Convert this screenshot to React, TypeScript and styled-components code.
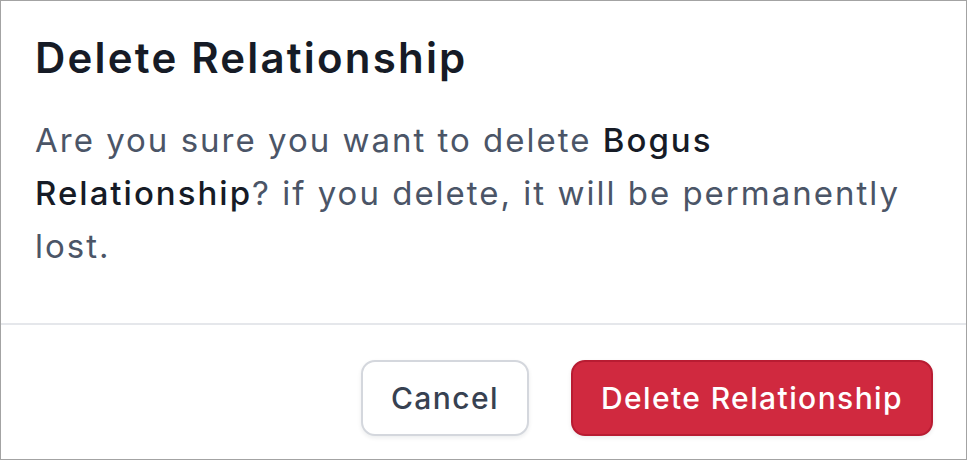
import React from "react";
import styled, { createGlobalStyle } from "styled-components";

const GlobalStyle = createGlobalStyle`
  html, body {
    margin: 0;
    padding: 0;
    background: #ffffff;
  }
  body {
    font-family: Inter, "Noto Sans", sans-serif;
  }
`;

const Dialog = styled.div`
  box-sizing: border-box;
  width: 967px;
  height: 460px;
  border: 1px solid #a3a3a3;
  background: #ffffff;
  display: flex;
  flex-direction: column;
`;

const Body = styled.div`
  padding: 29px 20px 50px 34px;
  border-bottom: 2px solid #e5e7eb;
`;

const Title = styled.h2`
  margin: 0;
  font-size: 42px;
  line-height: 56px;
  font-weight: 600;
  letter-spacing: 2.2px;
  color: #161b26;
`;

const Message = styled.p`
  margin: 28px 0 0 0;
  font-size: 33px;
  line-height: 53px;
  letter-spacing: 2px;
  color: #4b5567;
`;

const Strong = styled.span`
  color: #161b26;
  font-weight: 500;
`;

const Footer = styled.div`
  display: flex;
  justify-content: flex-end;
  gap: 42px;
  padding: 35px 33px 0 0;
`;

const Button = styled.button<{ $danger?: boolean }>`
  box-sizing: border-box;
  height: 76px;
  padding: 0 28px;
  border-radius: 14px;
  font-family: Inter, "Noto Sans", sans-serif;
  font-size: 30px;
  font-weight: 500;
  letter-spacing: 1.4px;
  cursor: pointer;
  border: 2px solid ${(p) => (p.$danger ? "#b81c32" : "#d4d7dd")};
  background: ${(p) => (p.$danger ? "#d0293f" : "#ffffff")};
  color: ${(p) => (p.$danger ? "#ffffff" : "#374151")};
  box-shadow: 0 2px 4px rgba(17, 24, 39, 0.08);
`;

export default function App() {
  return (
    <>
      <GlobalStyle />
      <Dialog>
        <Body>
          <Title>Delete Relationship</Title>
          <Message>
            Are you sure you want to delete <Strong>Bogus Relationship</Strong>? if
            you delete, it will be permanently lost.
          </Message>
        </Body>
        <Footer>
          <Button>Cancel</Button>
          <Button $danger>Delete Relationship</Button>
        </Footer>
      </Dialog>
    </>
  );
}
